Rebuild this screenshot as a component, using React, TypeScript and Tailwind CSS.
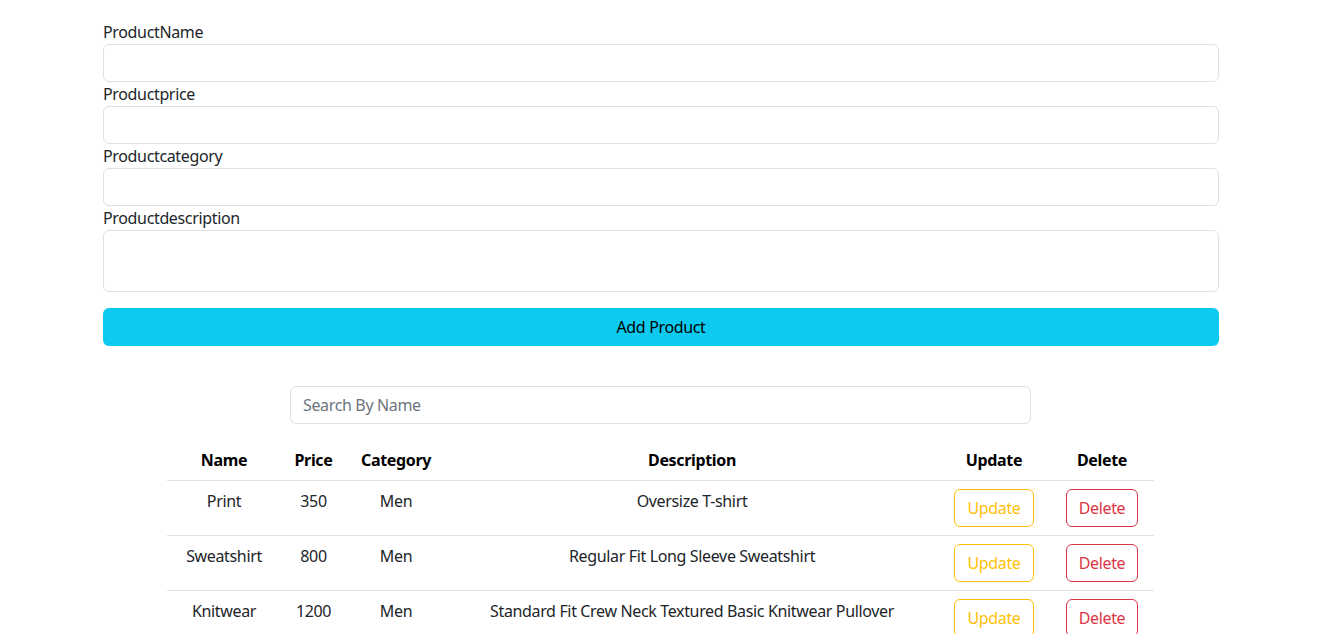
import React from "react";

const products = [
  { name: "Print", price: 350, category: "Men", description: "Oversize T-shirt" },
  { name: "Sweatshirt", price: 800, category: "Men", description: "Regular Fit Long Sleeve Sweatshirt" },
  { name: "Knitwear", price: 1200, category: "Men", description: "Standard Fit Crew Neck Textured Basic Knitwear Pullover" },
];

const inputCls =
  "block w-full h-[38px] rounded-[6px] border border-[#dee2e6] bg-white px-3 text-base text-[#212529] outline-none";

export default function App() {
  return (
    <div className="min-h-screen bg-white text-[#212529] text-base leading-6 font-['Segoe_UI','Noto_Sans',sans-serif] tracking-[-0.35px]">
      {/* Form */}
      <div className="ml-[103px] w-[1116px] pt-5">
        <label className="block">ProductName</label>
        <input className={inputCls} />
        <label className="block">Productprice</label>
        <input className={inputCls} />
        <label className="block">Productcategory</label>
        <input className={inputCls} />
        <label className="block">Productdescription</label>
        <textarea className="block w-full h-[62px] rounded-[6px] border border-[#dee2e6] bg-white px-3 py-1.5 outline-none resize-none" />
        <button className="mt-4 block w-full h-[38px] rounded-[6px] bg-[#0dcaf0] text-black">Add Product</button>
      </div>

      {/* Search */}
      <div className="ml-[290px] w-[741px] mt-10">
        <input className={`${inputCls} placeholder:text-[#6c757d]`} placeholder="Search By Name" />
      </div>

      {/* Table */}
      <table className="ml-[167px] w-[987px] mt-4 border-collapse text-center">
        <thead>
          <tr className="border-b border-[#dee2e6] font-bold text-black">
            <th className="w-[114px] p-2">Name</th>
            <th className="w-[65px] p-2">Price</th>
            <th className="w-[100px] p-2">Category</th>
            <th className="w-[492px] p-2">Description</th>
            <th className="w-[112px] p-2">Update</th>
            <th className="w-[104px] p-2">Delete</th>
          </tr>
        </thead>
        <tbody>
          {products.map((p) => (
            <tr key={p.name} className="border-b border-[#dee2e6] align-top">
              <td className="p-2">{p.name}</td>
              <td className="p-2">{p.price}</td>
              <td className="p-2">{p.category}</td>
              <td className="p-2">{p.description}</td>
              <td className="p-2">
                <button className="h-[38px] rounded-[6px] border border-[#ffc107] px-3 text-[#ffc107]">Update</button>
              </td>
              <td className="p-2">
                <button className="h-[38px] rounded-[6px] border border-[#dc3545] px-3 text-[#dc3545]">Delete</button>
              </td>
            </tr>
          ))}
        </tbody>
      </table>
    </div>
  );
}
